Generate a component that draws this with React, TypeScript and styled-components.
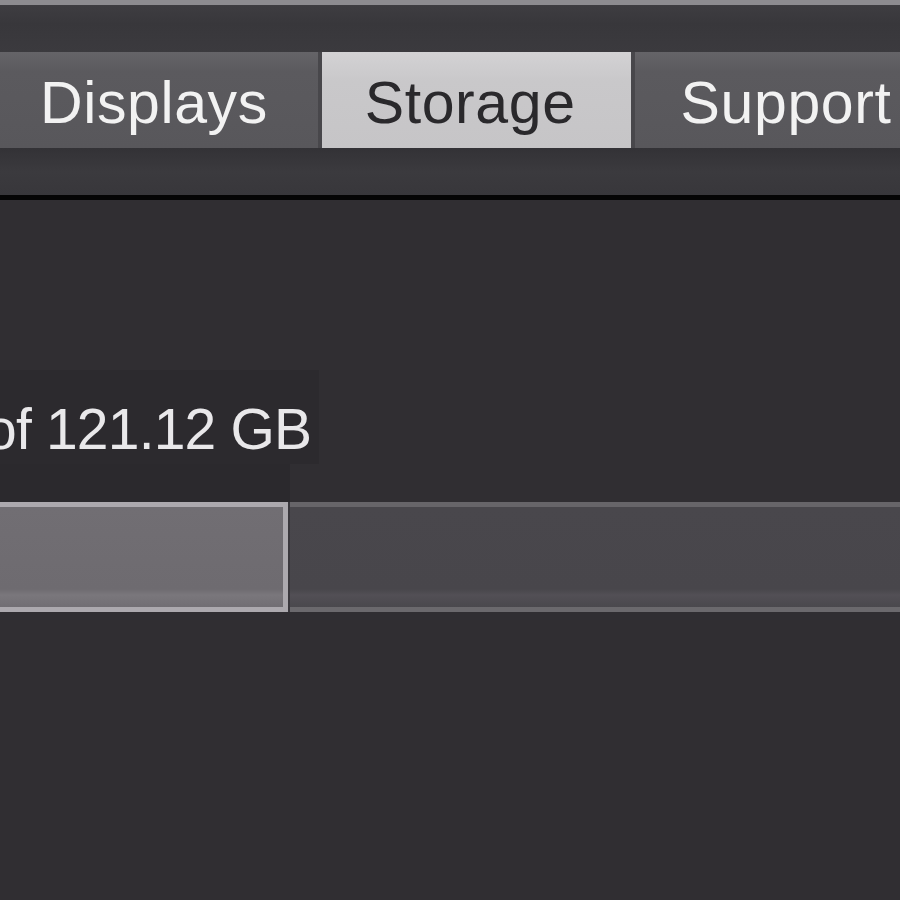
import React from "react";
import styled, { createGlobalStyle } from "styled-components";

const Global = createGlobalStyle`
  html, body { margin: 0; padding: 0; background: #302e32; }
  body { font-family: "Liberation Sans", Arial, sans-serif; overflow: hidden; }
`;

const Window = styled.div`
  width: 900px;
  height: 900px;
  overflow: hidden;
  display: flex;
  flex-direction: column;
  background: #302e32;
`;

const TitleStrip = styled.div`
  height: 5px;
  flex: none;
  background: #8d8c90;
`;

const Toolbar = styled.div`
  height: 47px;
  flex: none;
  background: linear-gradient(#3e3d41, #38373b 40%, #3b3a3e);
`;

const TabBar = styled.div`
  height: 96px;
  flex: none;
  display: flex;
  gap: 4px;
  margin-left: -14px;
  background: #48474b;
`;

const Tab = styled.div<{ $active?: boolean; $pl: number; $pr: number }>`
  flex: none;
  display: flex;
  align-items: center;
  height: 100%;
  box-sizing: border-box;
  padding: 6px ${(p) => p.$pr}px 0 ${(p) => p.$pl}px;
  background: ${(p) =>
    p.$active
      ? "linear-gradient(#d3d2d4, #c9c8ca 30%, #c6c5c7)"
      : "linear-gradient(#656468, #5b5a5e 20%, #58575b)"};
  color: ${(p) => (p.$active ? "#2a292c" : "#f2f2f2")};
  font-size: 59px;
  letter-spacing: 0.6px;
  line-height: 1;
  white-space: nowrap;
`;

const TabBand = styled.div`
  height: 47px;
  flex: none;
  background: linear-gradient(#333236, #3b3a3e 50%, #38373b);
`;

const Rule = styled.div`
  height: 5px;
  flex: none;
  background: #050505;
`;

const Content = styled.div`
  flex: 1;
  display: flex;
  flex-direction: column;
  padding-top: 170px;
`;

const Summary = styled.div`
  align-self: flex-start;
  margin-left: -15px;
  padding: 31px 8px 6px 0;
  background: #2c2a2e;
  color: #e9e8ea;
  font-size: 57px;
  letter-spacing: -0.8px;
  line-height: 1;
  white-space: nowrap;
`;

const Gap = styled.div`
  height: 38px;
  width: 290px;
  background: #2b292d;
`;

const Bar = styled.div`
  height: 110px;
  flex: none;
  display: flex;
  gap: 2px;
  background: #3a383d;
`;

const Segment = styled.div<{ $used?: boolean; $w: number }>`
  flex: none;
  width: ${(p) => p.$w}px;
  box-sizing: border-box;
  border-top: 5px solid ${(p) => (p.$used ? "#aca9ae" : "#676569")};
  border-bottom: 5px solid ${(p) => (p.$used ? "#aca9ae" : "#6b696d")};
  border-right: ${(p) => (p.$used ? "5px solid #aca9ae" : "none")};
  background: ${(p) =>
    p.$used
      ? "linear-gradient(#716e73, #6e6b70 82%, #7a777c 88%, #716e73)"
      : "linear-gradient(#49474c, #48464b 82%, #524f55 88%, #4a484d)"};
`;

export default function App() {
  return (
    <>
      <Global />
      <Window>
        <TitleStrip />
        <Toolbar />
        <TabBar>
          <Tab $pl={54} $pr={50}>Displays</Tab>
          <Tab $active $pl={43} $pr={55}>Storage</Tab>
          <Tab $pl={46} $pr={40}>Support</Tab>
        </TabBar>
        <TabBand />
        <Rule />
        <Content>
          <Summary>of 121.12 GB</Summary>
          <Gap />
          <Bar>
            <Segment $used $w={288} />
            <Segment $w={700} />
          </Bar>
        </Content>
      </Window>
    </>
  );
}
